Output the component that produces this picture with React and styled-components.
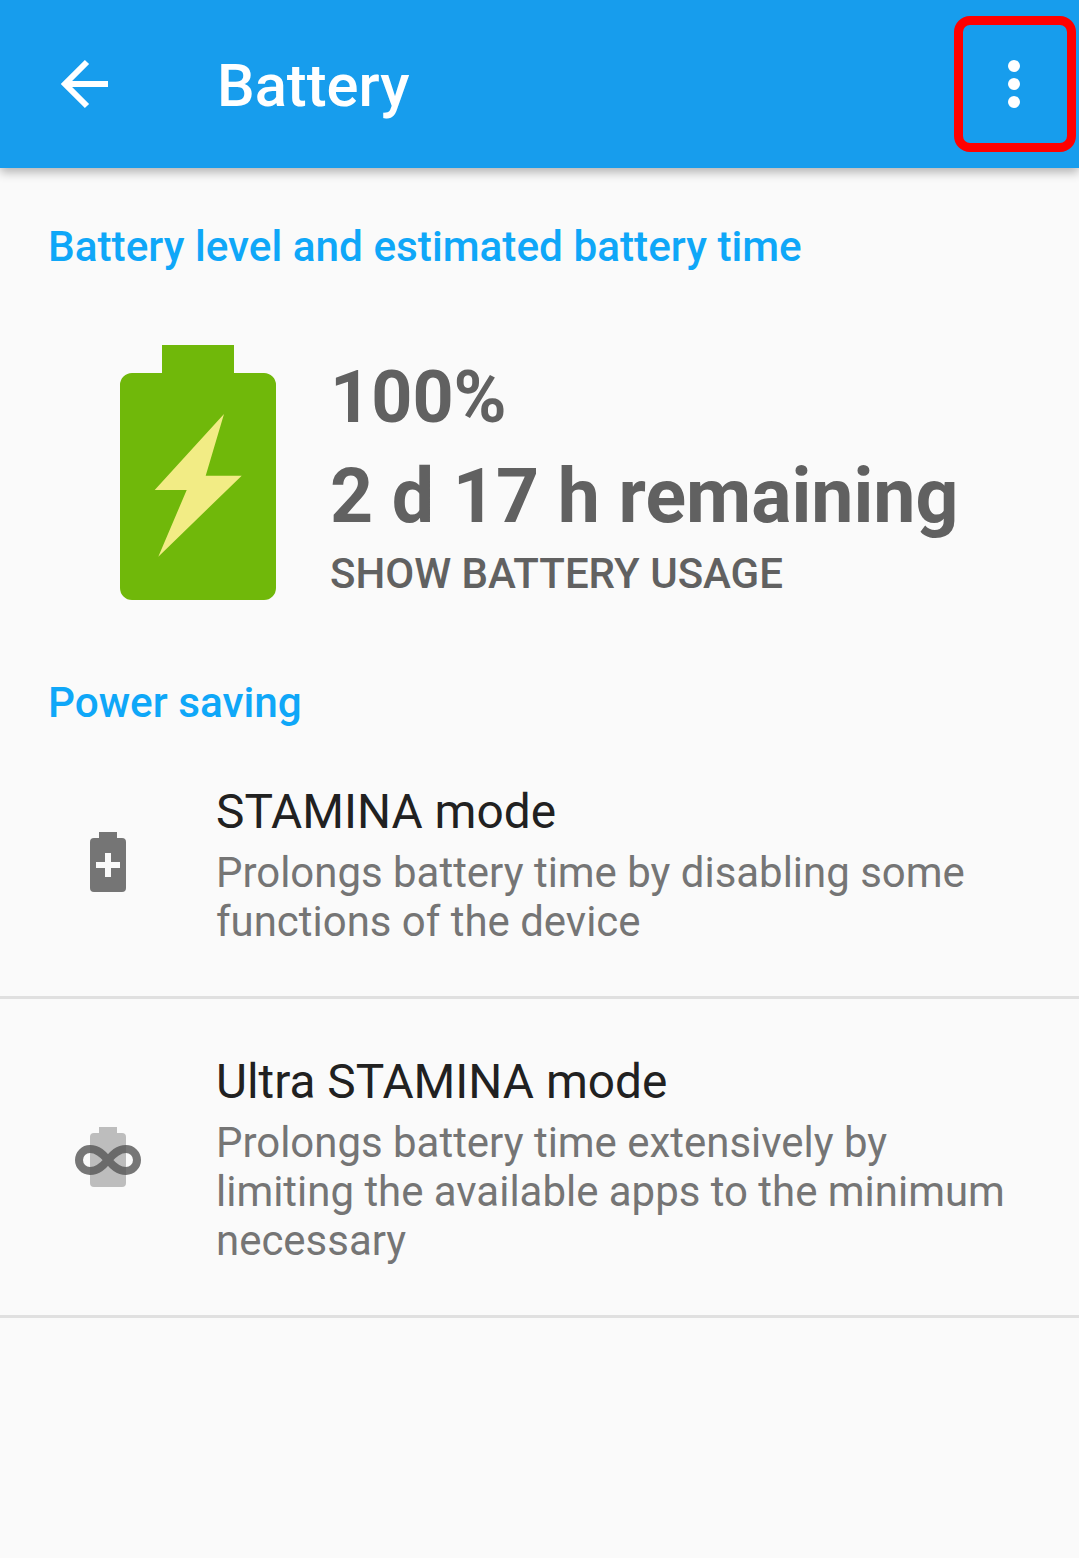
import React from 'react';
import styled, { createGlobalStyle } from 'styled-components';

const GlobalStyle = createGlobalStyle`
  html, body {
    margin: 0;
    padding: 0;
    background: #fafafa;
  }
  body {
    font-family: Roboto, "Liberation Sans", sans-serif;
  }
`;

const Page = styled.div`
  width: 1079px;
  height: 1558px;
  overflow: hidden;
  background: #fafafa;
`;

const Toolbar = styled.header`
  position: relative;
  display: flex;
  align-items: center;
  height: 168px;
  padding-left: 60px;
  box-sizing: border-box;
  background: #179ded;
  box-shadow: 0 4px 10px rgba(0, 0, 0, 0.3);
`;

const Title = styled.h1`
  margin: 6px 0 0 107px;
  font-size: 59.7px;
  font-weight: 500;
  line-height: 1;
  color: #fff;
`;

const MenuButton = styled.div`
  display: flex;
  flex-direction: column;
  align-items: center;
  gap: 6px;
  margin-left: auto;
  margin-right: 59px;
`;

const Dot = styled.span`
  width: 12px;
  height: 12px;
  border-radius: 50%;
  background: #fff;
`;

const Highlight = styled.div`
  position: absolute;
  left: 954px;
  top: 16px;
  width: 122px;
  height: 136px;
  box-sizing: border-box;
  border: 9px solid #ff0000;
  border-radius: 16px;
`;

const SectionTitle = styled.h2`
  margin: 0;
  padding: ${(p) => p.$padding};
  font-size: 42.3px;
  font-weight: 500;
  line-height: 50px;
  color: #0fa7f8;
`;

const BatteryPanel = styled.section`
  display: flex;
  align-items: flex-start;
  padding: 73px 0 0 120px;
  height: 280px;
`;

const BatteryText = styled.div`
  display: flex;
  flex-direction: column;
  margin: 3px 0 0 54px;
`;

const Level = styled.div`
  font-size: ${(p) => p.$size}px;
  font-weight: 700;
  line-height: ${(p) => p.$lineHeight}px;
  color: #616161;
`;

const UsageLink = styled.div`
  margin-top: 5px;
  font-size: 42px;
  font-weight: 500;
  line-height: 50px;
  color: #616161;
`;

const Row = styled.div`
  display: flex;
  align-items: center;
  box-sizing: border-box;
  height: ${(p) => p.$height}px;
  border-bottom: 3px solid #e0e0e0;
`;

const RowIcon = styled.div`
  display: flex;
  justify-content: center;
  flex: none;
  width: 216px;
`;

const RowBody = styled.div`
  display: flex;
  flex-direction: column;
  padding: 2px 60px 0 0;
`;

const RowTitle = styled.div`
  margin-bottom: 5px;
  font-size: 47.8px;
  line-height: 62px;
  color: #212121;
`;

const RowSummary = styled.div`
  font-size: 41.95px;
  line-height: 49px;
  color: #757575;
`;

const BackArrow = () => (
  <svg width="50" height="50" viewBox="0 0 50 50" fill="none" stroke="#fff" strokeWidth="6">
    <path d="M48 25H5" />
    <path d="M27 3L5 25L27 47" />
  </svg>
);

const BigBattery = () => (
  <svg width="156" height="255" viewBox="0 0 156 255">
    <path
      d="M42 0H114V28H144A12 12 0 0 1 156 40V243A12 12 0 0 1 144 255H12A12 12 0 0 1 0 243V40A12 12 0 0 1 12 28H42Z"
      fill="#70b80a"
    />
    <path d="M104 69L85.7 130.7H121.7L38.3 211.7L66.7 145H34.7Z" fill="#f2ec85" />
  </svg>
);

const PlusBattery = () => (
  <svg width="36" height="60" viewBox="0 0 36 60">
    <path
      d="M9 0H27V6H32A4 4 0 0 1 36 10V56A4 4 0 0 1 32 60H4A4 4 0 0 1 0 56V10A4 4 0 0 1 4 6H9ZM15 21V30H6V36H15V45H21V36H30V30H21V21Z"
      fill="#757575"
      fillRule="evenodd"
    />
  </svg>
);

const InfinityBattery = () => (
  <svg width="66" height="60" viewBox="0 0 66 60">
    <path
      d="M24 0H42V6H47A4 4 0 0 1 51 10V56A4 4 0 0 1 47 60H19A4 4 0 0 1 15 56V10A4 4 0 0 1 19 6H24Z"
      fill="#bdbdbd"
    />
    <path
      d="M33 33C28 27 23 22 15 22A11 11 0 0 0 15 44C23 44 28 39 33 33C38 27 43 22 51 22A11 11 0 0 1 51 44C43 44 38 39 33 33Z"
      fill="none"
      stroke="#555"
      strokeOpacity="0.8"
      strokeWidth="8"
    />
  </svg>
);

const App = () => {
  return (
    <Page>
      <GlobalStyle />
      <Toolbar>
        <BackArrow />
        <Title>Battery</Title>
        <MenuButton>
          <Dot />
          <Dot />
          <Dot />
        </MenuButton>
        <Highlight />
      </Toolbar>

      <SectionTitle $padding="54px 0 0 48px">Battery level and estimated battery time</SectionTitle>
      <BatteryPanel>
        <BigBattery />
        <BatteryText>
          <Level $size={71.8} $lineHeight={100}>100%</Level>
          <Level $size={75.2} $lineHeight={96}>2 d 17 h remaining</Level>
          <UsageLink>SHOW BATTERY USAGE</UsageLink>
        </BatteryText>
      </BatteryPanel>

      <SectionTitle $padding="53px 0 0 48px">Power saving</SectionTitle>
      <Row $height={271}>
        <RowIcon>
          <PlusBattery />
        </RowIcon>
        <RowBody>
          <RowTitle>STAMINA mode</RowTitle>
          <RowSummary>Prolongs battery time by disabling some functions of the device</RowSummary>
        </RowBody>
      </Row>
      <Row $height={319}>
        <RowIcon>
          <InfinityBattery />
        </RowIcon>
        <RowBody>
          <RowTitle>Ultra STAMINA mode</RowTitle>
          <RowSummary>Prolongs battery time extensively by limiting the available apps to the minimum necessary</RowSummary>
        </RowBody>
      </Row>
    </Page>
  );
};

export default App;
